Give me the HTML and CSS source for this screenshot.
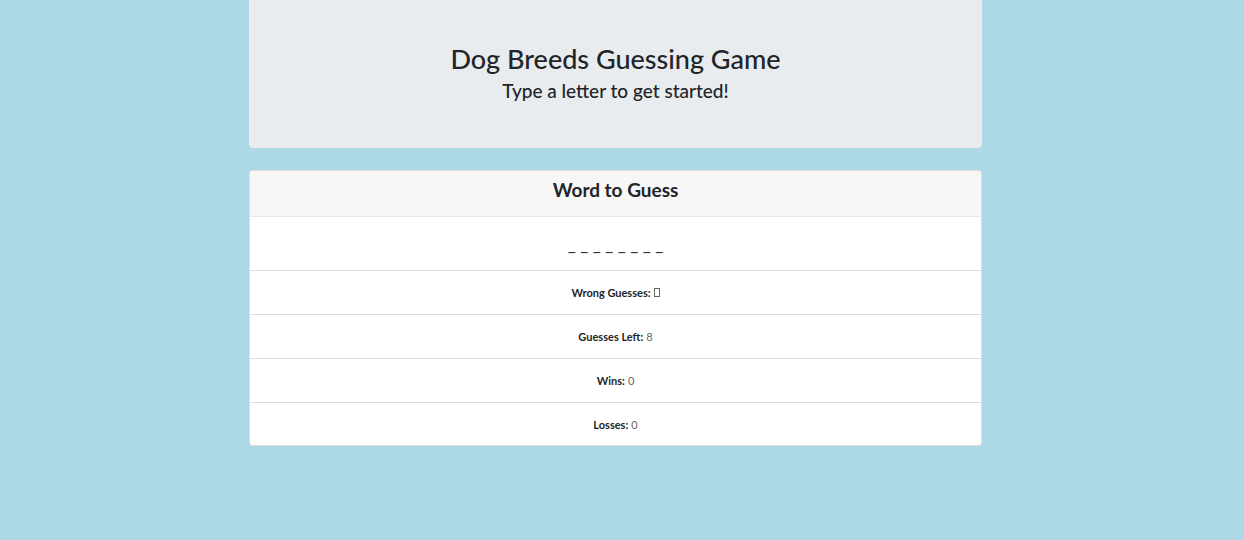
FILE: index.html
```html
<!DOCTYPE html>
<html lang="en">
<head>
<meta charset="utf-8">
<title>Dog Breeds Guessing Game</title>
<link rel="stylesheet" href="styles.css">
</head>
<body>
<div class="page">
  <header class="jumbotron">
    <h1 class="title">Dog Breeds Guessing Game</h1>
    <p class="subtitle">Type a letter to get started!</p>
  </header>
  <section class="card">
    <div class="card-header">Word to Guess</div>
    <div class="card-body">_ _ _ _ _ _ _ _</div>
    <ul class="list">
      <li class="item"><b>Wrong Guesses:</b> <span class="tofu"></span></li>
      <li class="item"><b>Guesses Left:</b> <span class="val">8</span></li>
      <li class="item"><b>Wins:</b> <span class="val">0</span></li>
      <li class="item"><b>Losses:</b> <span class="val">0</span></li>
    </ul>
  </section>
</div>
</body>
</html>
```
FILE: styles.css
```css
html, body {
  margin: 0;
  padding: 0;
  background: #add8e6;
  font-family: "Lato", "Open Sans", sans-serif;
  color: #212529;
}
.page {
  width: 733px;
  margin-left: 249px;
}
.jumbotron {
  background: #e9ecef;
  height: 148px;
  box-sizing: border-box;
  border-radius: 0 0 4px 4px;
  display: flex;
  flex-direction: column;
  align-items: center;
  padding-top: 42px;
}
.title {
  margin: 0;
  font-size: 27px;
  font-weight: 500;
  line-height: 34px;
}
.subtitle {
  margin: 0;
  font-size: 19px;
  font-weight: 500;
  line-height: 30px;
}
.card {
  margin-top: 22px;
  background: #fff;
  border: 1px solid rgba(0,0,0,.125);
  border-radius: 4px;
  overflow: hidden;
}
.card-header {
  background: #f7f7f7;
  height: 46px;
  box-sizing: border-box;
  padding-bottom: 8px;
  border-bottom: 1px solid rgba(0,0,0,.06);
  display: flex;
  align-items: center;
  justify-content: center;
  font-size: 19px;
  font-weight: 700;
}
.card-body {
  height: 53px;
  display: flex;
  align-items: center;
  justify-content: center;
  padding-top: 2px;
  box-sizing: border-box;
  font-size: 17.5px;
  color: #333;
}
.list {
  list-style: none;
  margin: 0;
  padding: 0;
}
.item {
  height: 43px;
  border-top: 1px solid #ddd;
  display: flex;
  align-items: center;
  justify-content: center;
  font-size: 11px;
  gap: 3px;
}
.item:last-child {
  height: 42px;
}
.item b {
  font-weight: 700;
}
.val {
  color: #666;
}
.tofu {
  display: inline-block;
  width: 4px;
  height: 7px;
  border: 1px solid #666;
}
```
